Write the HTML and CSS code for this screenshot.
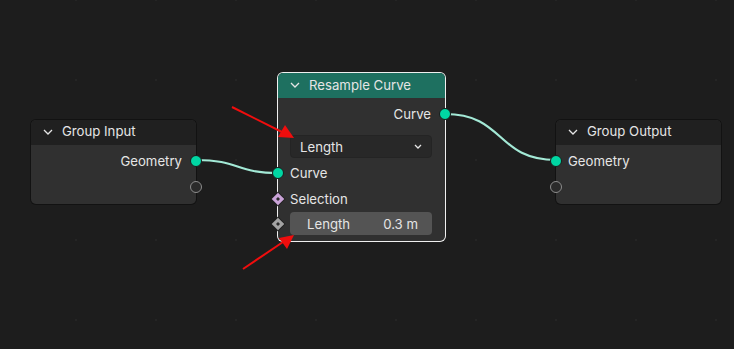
FILE: index.html
```html
<!DOCTYPE html>
<html lang="en">

<head>
    <meta charset="UTF-8">
    <link rel="stylesheet" href="styles.css">
    <title>Resample Curve</title>
</head>

<body>
    <div class="editor">
        <svg class="links" width="734" height="349" viewBox="0 0 734 349">
            <path d="M196 160 C 240 160, 235 173, 279 173" class="link" />
            <path d="M445 114 C 505 114, 496 160, 556 160" class="link" />
        </svg>

        <!-- group input -->
        <div class="node group-input">
            <div class="node-header">
                <svg class="chevron" width="10" height="6" viewBox="0 0 10 6"><polyline points="1,1 5,5 9,1" /></svg>
                <span>Group Input</span>
            </div>
            <div class="node-body">
                <div class="row out">
                    <span>Geometry</span>
                    <i class="socket geo right"></i>
                </div>
                <div class="row out">
                    <i class="socket empty right"></i>
                </div>
            </div>
        </div>

        <!-- resample -->
        <div class="node resample selected">
            <div class="node-header">
                <svg class="chevron" width="10" height="6" viewBox="0 0 10 6"><polyline points="1,1 5,5 9,1" /></svg>
                <span>Resample Curve</span>
            </div>
            <div class="node-body">
                <div class="row out">
                    <span>Curve</span>
                    <i class="socket geo right"></i>
                </div>
                <div class="row menu-row">
                    <div class="dropdown">
                        <span>Length</span>
                        <svg class="chevron" width="8" height="5" viewBox="0 0 8 5"><polyline points="1,1 4,4 7,1" /></svg>
                    </div>
                </div>
                <div class="row in">
                    <i class="socket geo left"></i>
                    <span>Curve</span>
                </div>
                <div class="row in">
                    <svg class="diamond" width="16" height="16" viewBox="0 0 16 16">
                        <path d="M8 0.5 L15.5 8 L8 15.5 L0.5 8 Z" fill="#1e1e1e" />
                        <path d="M8 1.7 L14.3 8 L8 14.3 L1.7 8 Z" fill="#caa3d8" />
                        <path d="M8 6 L10 8 L8 10 L6 8 Z" fill="#2a2a2a" />
                    </svg>
                    <span>Selection</span>
                </div>
                <div class="row in">
                    <svg class="diamond" width="16" height="16" viewBox="0 0 16 16">
                        <path d="M8 0.5 L15.5 8 L8 15.5 L0.5 8 Z" fill="#1e1e1e" />
                        <path d="M8 1.7 L14.3 8 L8 14.3 L1.7 8 Z" fill="#a3a3a3" />
                        <path d="M8 6 L10 8 L8 10 L6 8 Z" fill="#2a2a2a" />
                    </svg>
                    <div class="field">
                        <span>Length</span>
                        <span>0.3 m</span>
                    </div>
                </div>
            </div>
        </div>

        <!-- group output -->
        <div class="node group-output">
            <div class="node-header">
                <svg class="chevron" width="10" height="6" viewBox="0 0 10 6"><polyline points="1,1 5,5 9,1" /></svg>
                <span>Group Output</span>
            </div>
            <div class="node-body">
                <div class="row in">
                    <i class="socket geo left"></i>
                    <span>Geometry</span>
                </div>
                <div class="row in">
                    <i class="socket empty left"></i>
                </div>
            </div>
        </div>

        <svg class="arrows" width="734" height="349" viewBox="0 0 734 349">
            <line x1="232" y1="107" x2="282" y2="132" class="arrow" />
            <polygon points="294,138 278,137 285,125" class="arrow-head" />
            <line x1="243" y1="269" x2="283" y2="242" class="arrow" />
            <polygon points="294,235 287,249 279,238" class="arrow-head" />
        </svg>
    </div>
</body>

</html>
```

FILE: styles.css
```css
* {
    margin: 0;
    padding: 0;
    box-sizing: border-box;
}

body {
    background: #1d1d1d;
    font-family: Inter, "DejaVu Sans", sans-serif;
    font-size: 13.2px;
    color: #e5e5e5;
}

.editor {
    position: relative;
    width: 734px;
    height: 349px;
    overflow: hidden;
    background-color: #1d1d1d;
    background-image: radial-gradient(circle, #252525 1px, transparent 1px);
    background-size: 80px 80px;
    background-position: 36px 40px;
}

.links,
.arrows {
    position: absolute;
    left: 0;
    top: 0;
}

.arrows {
    z-index: 5;
}

.link {
    fill: none;
    stroke: #a3e9d6;
    stroke-width: 2.2;
}

.arrow {
    stroke: #f00d0d;
    stroke-width: 2;
}

.arrow-head {
    fill: #f00d0d;
}

/* nodes */

.node {
    position: absolute;
    background: #303030;
    border-radius: 5px;
    box-shadow: 0 0 0 1px #121212;
}

.node.selected {
    box-shadow: 0 0 0 1px #f0f0f0;
}

.group-input {
    left: 31px;
    top: 120px;
    width: 165px;
    height: 84px;
}

.group-output {
    left: 556px;
    top: 120px;
    width: 165px;
    height: 84px;
}

.resample {
    left: 278px;
    top: 73px;
    width: 167px;
    height: 168px;
    z-index: 2;
}

.node-header {
    display: flex;
    align-items: center;
    gap: 9px;
    height: 25px;
    padding: 0 0 3px 12px;
    background: #202020;
    border-radius: 5px 5px 0 0;
}

.resample .node-header {
    background: #1e7060;
    padding-bottom: 2px;
}

.chevron {
    flex: none;
    fill: none;
    stroke: #e5e5e5;
    stroke-width: 1.3;
}

.node-header .chevron {
    margin-top: 1px;
}

.node-body {
    padding-top: 2px;
}

.row {
    position: relative;
    display: flex;
    align-items: center;
    height: 26px;
}

.row.out {
    justify-content: flex-end;
    padding-right: 14px;
}

.row.in {
    padding-left: 12px;
}

.resample .node-body {
    padding-top: 3px;
}

.resample .row.in {
    height: 25px;
}

.resample .row.in:nth-child(3) {
    height: 26px;
}

.menu-row {
    height: 33px;
    align-items: flex-end;
    padding: 0 13px 2px 12px;
}

.group-input .row:first-child,
.group-output .row:first-child {
    height: 27px;
    padding-top: 1px;
}

.dropdown {
    display: flex;
    align-items: center;
    justify-content: space-between;
    width: 100%;
    height: 23px;
    padding: 0 9px 0 9px;
    background: #282828;
    border: 1px solid #242424;
    border-radius: 4px;
}

.field {
    display: flex;
    align-items: center;
    justify-content: space-between;
    flex: 1;
    height: 23px;
    margin-right: 13px;
    padding: 0 14px 0 17px;
    background: #545454;
    border-radius: 4px;
}

/* sockets */

.socket {
    position: absolute;
    top: 50%;
    width: 12px;
    height: 12px;
    margin-top: -6px;
    border-radius: 50%;
}

.socket.left {
    left: -6px;
}

.socket.right {
    right: -6px;
}

.socket.geo {
    background: #00d6a3;
    border: 1px solid #1a1a1a;
}

.socket.empty {
    background: #2a2a2a;
    border: 1.5px solid #8c8c8c;
}

.diamond {
    position: absolute;
    left: -8px;
    top: 50%;
    margin-top: -8px;
}
```
